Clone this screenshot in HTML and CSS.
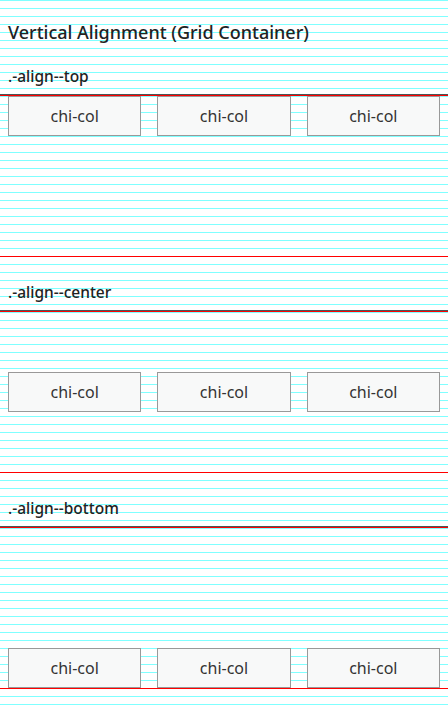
FILE: index.html
```html
<!DOCTYPE html>
<html lang="en">
<head>
<meta charset="utf-8">
<title>Vertical Alignment (Grid Container)</title>
<link rel="stylesheet" href="styles.css">
</head>
<body>
  <h2 class="title">Vertical Alignment (Grid Container)</h2>

  <section class="demo">
    <h3 class="demo-label">.-align--top</h3>
    <div class="grid align-top">
      <div class="col"><div class="cell">chi-col</div></div>
      <div class="col"><div class="cell">chi-col</div></div>
      <div class="col"><div class="cell">chi-col</div></div>
    </div>
  </section>

  <section class="demo">
    <h3 class="demo-label">.-align--center</h3>
    <div class="grid align-center">
      <div class="col"><div class="cell">chi-col</div></div>
      <div class="col"><div class="cell">chi-col</div></div>
      <div class="col"><div class="cell">chi-col</div></div>
    </div>
  </section>

  <section class="demo">
    <h3 class="demo-label">.-align--bottom</h3>
    <div class="grid align-bottom">
      <div class="col"><div class="cell">chi-col</div></div>
      <div class="col"><div class="cell">chi-col</div></div>
      <div class="col"><div class="cell">chi-col</div></div>
    </div>
  </section>
</body>
</html>
```

FILE: styles.css
```css
html {
  background: #ffffff;
}

body {
  margin: 0;
  padding: 20px 8px 0;
  min-height: 712px;
  box-sizing: border-box;
  font-family: "Noto Sans", "Open Sans", sans-serif;
  color: #222222;
  background-color: #ffffff;
  background-image: linear-gradient(to bottom, #80ffff 0, #80ffff 1px, transparent 1px, transparent 8px);
  background-size: 100% 8px;
  background-repeat: repeat;
}

.title {
  margin: 0 0 22px;
  font-size: 18px;
  line-height: 24px;
  font-weight: 500;
  color: #222222;
}

.demo {
  margin: 0 0 25px;
}

.demo-label {
  margin: 0;
  font-size: 15.5px;
  line-height: 20px;
  font-weight: 500;
  color: #222222;
}

.grid {
  display: grid;
  grid-template-columns: repeat(3, 1fr);
  column-gap: 16px;
  margin: 9px -8px 0;
  padding: 0 8px;
  height: 162px;
  box-sizing: border-box;
  border-top: 1px solid #ff0000;
  border-bottom: 1px solid #ff0000;
  box-shadow: 0 -1px 0 #4a5656;
}

.align-top {
  align-items: start;
}

.align-center {
  align-items: center;
}

.align-bottom {
  align-items: end;
}

.cell {
  height: 40px;
  box-sizing: border-box;
  border: 1px solid #999999;
  background: #f8f9f9;
  color: #333333;
  font-size: 16px;
  line-height: 38px;
  text-align: center;
}
```
